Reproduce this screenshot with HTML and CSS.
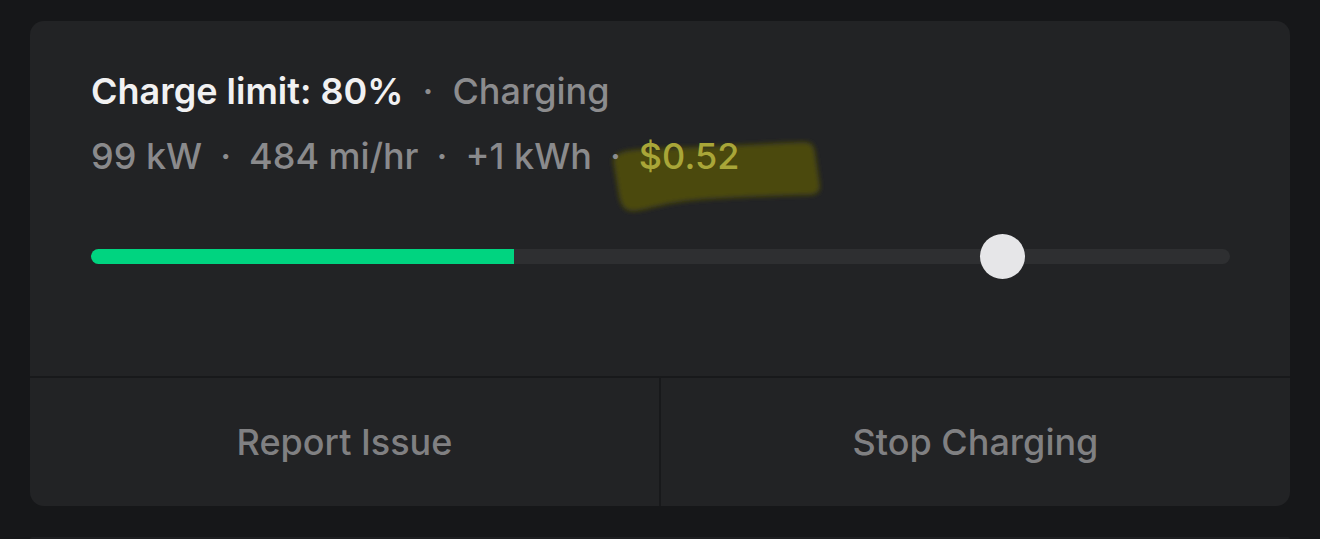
FILE: index.html
```html
<!DOCTYPE html>
<html>
<head>
<meta charset="utf-8">
<link rel="stylesheet" href="styles.css">
</head>
<body>
<div class="card">
  <div class="info">
    <div class="title"><span class="strong">Charge limit: 80%</span><span class="dot">·</span><span class="status">Charging</span></div>
    <div class="stats">
      <span>99 kW</span><span class="dot">·</span><span>484 mi/hr</span><span class="dot">·</span><span>+1 kWh</span><span class="dot">·</span><span class="cost"><svg class="marker" width="220" height="80" viewBox="0 0 220 80"><defs><filter id="soft" x="-10%" y="-20%" width="120%" height="140%"><feGaussianBlur stdDeviation="2.5"/></filter></defs><path d="M6 22 C10 14 18 12 40 11 C90 9 150 6 196 4 C205 4 207 8 208 14 L213 48 C213 55 208 57 200 57 C160 58 120 60 90 62 C60 64 40 72 28 73 C18 74 14 68 12 58 Z" fill="#4b490b" filter="url(#soft)"/></svg><span class="cost-text">$0.52</span></span>
    </div>
    <div class="slider">
      <div class="fill" style="width: 37.1%"></div>
      <div class="thumb" style="left: 80%"></div>
    </div>
  </div>
  <div class="actions">
    <button class="action">Report Issue</button>
    <button class="action">Stop Charging</button>
  </div>
</div>
<div class="card next"></div>
</body>
</html>
```
FILE: styles.css
```css
* { box-sizing: border-box; }
html, body { margin: 0; padding: 0; }
body {
  background: #161719;
  padding: 21px 30px 0;
  font-family: Inter, "Liberation Sans", sans-serif;
  overflow: hidden;
  height: 539px;
}
.card {
  width: 1260px;
  background: #222325;
  border-radius: 14px;
  overflow: hidden;
}
.card.next { margin-top: 31px; height: 2px; background: #1e1f21; border-radius: 14px 14px 0 0; }
.info {
  padding: 48px 60px 0 61px;
  height: 357px;
  border-bottom: 2px solid #18191b;
}
.title {
  font-size: 36px;
  line-height: 44px;
  display: flex;
  align-items: baseline;
}
.strong { color: #f1f1f2; font-weight: 600; }
.status { color: #8c8c8e; font-weight: 500; }
.dot { color: #8c8c8e; margin: 0 19px; font-weight: 500; position: relative; z-index: 1; }
.stats {
  margin-top: 21px;
  font-size: 36px;
  line-height: 44px;
  color: #8a8a8c;
  font-weight: 500;
  display: flex;
  align-items: baseline;
}
.stats .dot { margin: 0 18px; }
.cost { position: relative; }
.marker {
  position: absolute;
  left: -32px;
  top: 4px;
}
.cost-text { position: relative; color: #a9a638; }
.slider {
  position: relative;
  margin-top: 71px;
  height: 15px;
  background: #2e2f31;
  border-radius: 8px;
}
.fill {
  height: 100%;
  background: #00d480;
  border-radius: 8px 0 0 8px;
}
.thumb {
  position: absolute;
  top: 50%;
  width: 45px;
  height: 45px;
  margin: -22.5px 0 0 -22.5px;
  border-radius: 50%;
  background: #e6e6e8;
}
.actions {
  display: flex;
  height: 128px;
}
.action {
  flex: 1;
  background: transparent;
  border: 0;
  color: #808082;
  font-family: inherit;
  font-size: 36px;
  font-weight: 500;
  padding: 0;
}
.action + .action { border-left: 2px solid #18191b; }
```
